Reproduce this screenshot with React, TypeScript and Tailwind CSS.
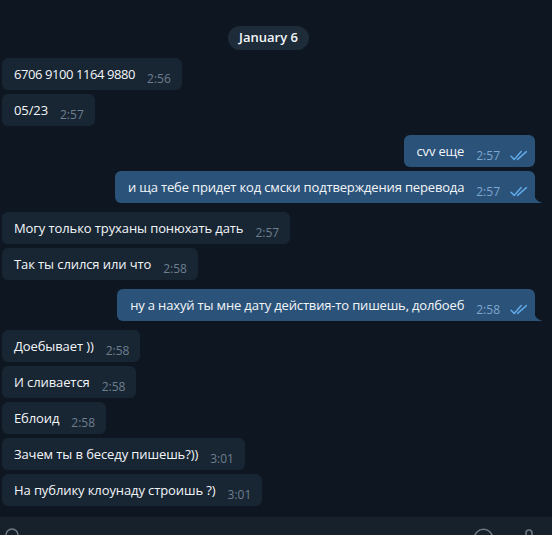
import React from "react";

type Msg = { text: string; time: string; tight?: boolean };

const groups: { out: boolean; items: Msg[] }[] = [
  {
    out: false,
    items: [
      { text: "6706 9100 1164 9880", time: "2:56", tight: true },
      { text: "05/23", time: "2:57" },
    ],
  },
  {
    out: true,
    items: [
      { text: "cvv еще", time: "2:57" },
      { text: "и ща тебе придет код смски подтверждения перевода", time: "2:57" },
    ],
  },
  {
    out: false,
    items: [
      { text: "Могу только труханы понюхать дать", time: "2:57" },
      { text: "Так ты слился или что", time: "2:58" },
    ],
  },
  {
    out: true,
    items: [
      { text: "ну а нахуй ты мне дату действия-то пишешь, долбоеб", time: "2:58" },
    ],
  },
  {
    out: false,
    items: [
      { text: "Доебывает ))", time: "2:58" },
      { text: "И сливается", time: "2:58" },
      { text: "Еблоид", time: "2:58" },
      { text: "Зачем ты в беседу пишешь?))", time: "3:01" },
      { text: "На публику клоунаду строишь ?)", time: "3:01" },
    ],
  },
];

function Checks() {
  return (
    <svg width="18" height="11" viewBox="0 0 18 11" fill="none">
      <path
        d="M1 6.2 L4.2 9.4 L11.2 1.6"
        stroke="#5fa9e8"
        strokeWidth="1.5"
        strokeLinecap="round"
        strokeLinejoin="round"
      />
      <path
        d="M7.6 9.4 L16.4 1.6"
        stroke="#5fa9e8"
        strokeWidth="1.5"
        strokeLinecap="round"
      />
    </svg>
  );
}

function Bubble({ msg, out, tail }: { msg: Msg; out: boolean; tail: boolean }) {
  if (out) {
    return (
      <div
        className={
          tail
            ? "relative flex h-[32px] items-start rounded-[6px] rounded-br-none bg-[#2b5278] pl-[13px] pr-[7px] pt-[6px]"
            : "relative flex h-[32px] items-start rounded-[6px] bg-[#2b5278] pl-[13px] pr-[7px] pt-[6px]"
        }
      >
        <span className="whitespace-nowrap text-[13px] leading-[20px] tracking-[-0.16px] text-[#f3f6f9]">
          {msg.text}
        </span>
        <span className="ml-[12px] self-end pb-[3px] text-[12px] leading-[16px] text-[#7ea7cf]">
          {msg.time}
        </span>
        <span className="ml-[10px] self-end pb-[6px]">
          <Checks />
        </span>
        {tail && (
          <svg
            className="absolute bottom-0 right-[-8px]"
            width="9"
            height="11"
            viewBox="0 0 9 11"
          >
            <path d="M0 0 C0 6 3 9.5 8.5 11 H0 Z" fill="#2b5278" />
          </svg>
        )}
      </div>
    );
  }
  return (
    <div className="flex h-[32px] items-start rounded-[6px] bg-[#182533] pl-[12px] pr-[11px] pt-[6px]">
      <span
        className={
          msg.tight
            ? "whitespace-nowrap text-[13px] leading-[20px] tracking-[-0.42px] text-[#f3f6f9]"
            : "whitespace-nowrap text-[13px] leading-[20px] tracking-[-0.1px] text-[#f3f6f9]"
        }
      >
        {msg.text}
      </span>
      <span className="ml-[12px] self-end pb-[3px] text-[12px] leading-[16px] text-[#6d7f8f]">
        {msg.time}
      </span>
    </div>
  );
}

export default function App() {
  return (
    <div
      className="flex h-[535px] w-[552px] flex-col overflow-hidden bg-[#0e1621]"
      style={{ fontFamily: '"Open Sans", "Noto Sans", sans-serif' }}
    >
      <div className="flex h-[517px] shrink-0 flex-col gap-[9px] pl-[2px] pr-[17px] pt-[26px]">
        <div className="mb-[-1px] flex h-[24px] items-center self-center rounded-full bg-[#1e2c3a] px-[11px] text-[13px] font-semibold text-[#f3f6f9]">
          January 6
        </div>
        {groups.map((g, gi) => (
          <div
            key={gi}
            className={
              g.out
                ? "flex flex-col items-end gap-[4px]"
                : "flex flex-col items-start gap-[4px]"
            }
          >
            {g.items.map((m, i) => (
              <Bubble
                key={i}
                msg={m}
                out={g.out}
                tail={g.out && i === g.items.length - 1}
              />
            ))}
          </div>
        ))}
      </div>
      <div className="flex flex-1 items-start justify-between bg-[#17212b] pl-[3px] pr-[18px] pt-[10px]">
        <svg width="18" height="18" viewBox="0 0 18 18" fill="none">
          <path
            d="M3 12 V8 A6 6 0 0 1 15 8 V13"
            stroke="#6c7883"
            strokeWidth="1.6"
            strokeLinecap="round"
          />
        </svg>
        <div className="flex items-start gap-[30px]">
          <svg width="21" height="21" viewBox="0 0 21 21" fill="none" className="mt-[1px]">
            <circle cx="10.5" cy="10.5" r="9.2" stroke="#6c7883" strokeWidth="1.6" />
          </svg>
          <svg width="10" height="16" viewBox="0 0 10 16" fill="none" className="mt-[2px]">
            <rect x="2" y="1" width="6" height="12" rx="3" stroke="#6c7883" strokeWidth="1.6" />
          </svg>
        </div>
      </div>
    </div>
  );
}
